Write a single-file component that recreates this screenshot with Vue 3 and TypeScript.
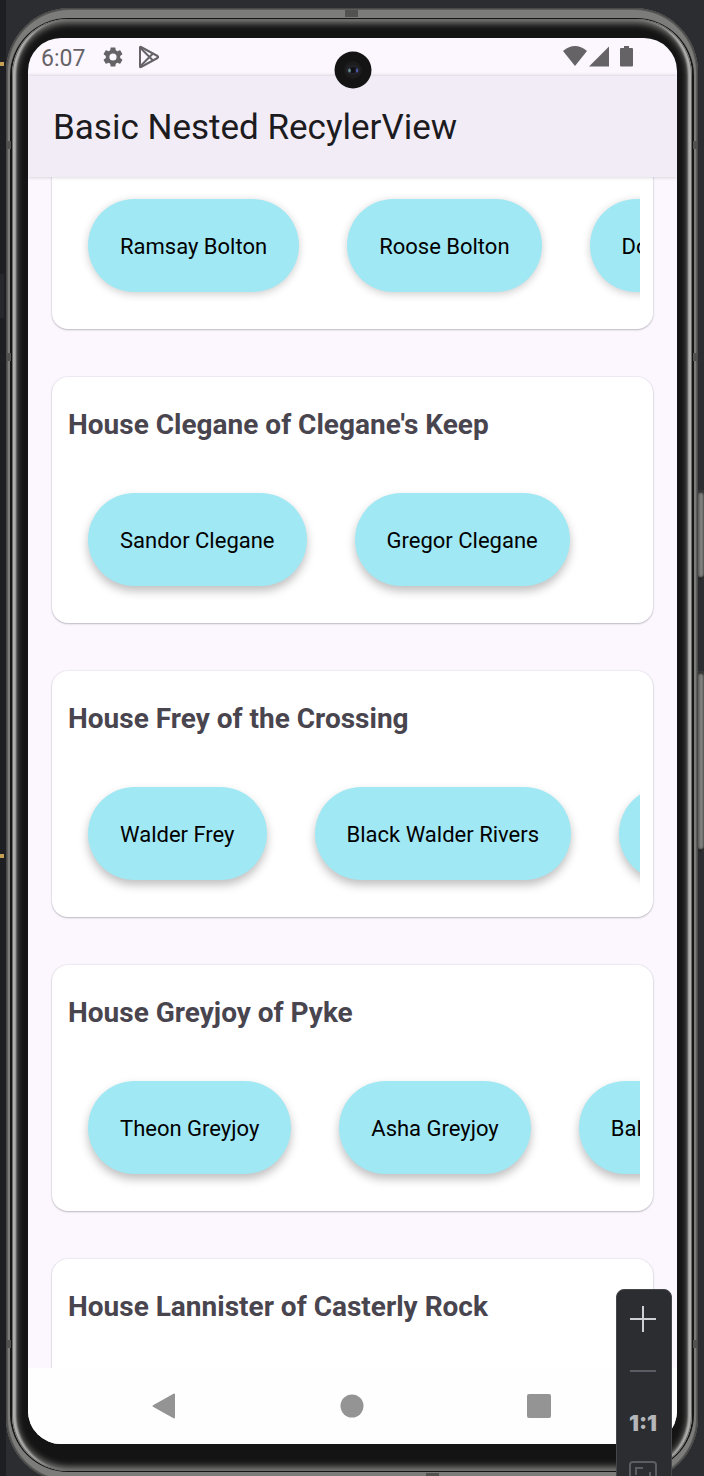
<script setup lang="ts">
interface House {
  name?: string
  members: string[]
}

const houses: House[] = [
  { members: ['Ramsay Bolton', 'Roose Bolton', 'Domeric Bolton'] },
  { name: "House Clegane of Clegane's Keep", members: ['Sandor Clegane', 'Gregor Clegane'] },
  { name: 'House Frey of the Crossing', members: ['Walder Frey', 'Black Walder Rivers', 'Lothar Frey'] },
  { name: 'House Greyjoy of Pyke', members: ['Theon Greyjoy', 'Asha Greyjoy', 'Balon Greyjoy'] },
  { name: 'House Lannister of Casterly Rock', members: ['Tywin Lannister', 'Tyrion Lannister', 'Jaime Lannister'] },
]
</script>

<template>
  <div class="emulator">
    <div class="gutter">
      <i class="mark mark-top"></i>
      <i class="mark mark-block"></i>
      <i class="mark mark-low"></i>
    </div>
    <i class="side-key power"></i>
    <i class="side-key volume"></i>

    <div class="phone">
      <i class="antenna antenna-top"></i>
      <i class="antenna antenna-bottom"></i>
      <i class="antenna antenna-side left high"></i>
      <i class="antenna antenna-side left mid"></i>
      <i class="antenna antenna-side left low"></i>
      <i class="antenna antenna-side right high"></i>
      <i class="antenna antenna-side right mid"></i>
      <i class="antenna antenna-side right low"></i>
      <div class="rim">
        <div class="bezel">
          <main class="screen">
            <div class="status">
              <span class="clock">6:07</span>
              <svg class="gear" viewBox="0 0 24 24" width="24" height="24" aria-hidden="true">
                <path fill="#666367" d="M19.14 12.94c.04-.3.06-.61.06-.94 0-.32-.02-.64-.07-.94l2.03-1.58a.49.49 0 0 0 .12-.61l-1.92-3.32a.488.488 0 0 0-.59-.22l-2.39.96c-.5-.38-1.03-.7-1.62-.94l-.36-2.54a.484.484 0 0 0-.48-.41h-3.84c-.24 0-.43.17-.47.41l-.36 2.54c-.59.24-1.13.57-1.62.94l-2.39-.96c-.22-.08-.47 0-.59.22L2.74 8.87c-.12.21-.08.47.12.61l2.03 1.58c-.05.3-.09.63-.09.94s.02.64.07.94l-2.03 1.58a.49.49 0 0 0-.12.61l1.92 3.32c.12.22.37.29.59.22l2.39-.96c.5.38 1.03.7 1.62.94l.36 2.54c.05.24.24.41.48.41h3.84c.24 0 .44-.17.47-.41l.36-2.54c.59-.24 1.13-.56 1.62-.94l2.39.96c.22.08.47 0 .59-.22l1.92-3.32c.12-.22.07-.47-.12-.61zM12 15.6A3.6 3.6 0 1 1 12 8.400a3.600 3.600 0 0 1 0 7.200z" />
              </svg>
              <svg viewBox="0 0 24 24" width="24" height="24" aria-hidden="true">
                <g fill="none" stroke="#666367" stroke-width="2" stroke-linejoin="round">
                  <path d="M3 2.400V21.600Q3 22.600 4 22L20.500 13Q21.800 12 20.500 11L4 2Q3 1.500 3 2.400z" />
                  <path d="M3.500 3L16 15.500M3.500 21L16 8.500" />
                </g>
              </svg>
              <svg class="signals" viewBox="0 0 72 24" width="72" height="24" aria-hidden="true">
                <g fill="#666367">
                  <path d="M0 6Q12-4 24 6L12 21z" />
                  <path d="M26 21.500L46 1.500V21.500z" />
                  <path d="M57 4q0-1 1-1h3V1h5v2h3q1 0 1 1v16.500q0 1-1 1H58q-1 0-1-1z" />
                </g>
              </svg>
              <svg class="camera" viewBox="0 0 38 38" width="38" height="38" aria-hidden="true">
                <circle cx="19" cy="19" r="18.500" fill="#141414" />
                <circle cx="19" cy="19" r="9" fill="#1c1c1c" />
                <ellipse cx="19" cy="19" rx="7" ry="5" fill="#23232a" />
                <circle cx="19" cy="19" r="3" fill="#121216" />
                <ellipse cx="15.500" cy="19.500" rx="1.300" ry="2" fill="#648d94" />
                <ellipse cx="23" cy="19.500" rx="1.300" ry="2" fill="#4854a0" />
              </svg>
            </div>

            <header class="app-bar">
              <h1>Basic Nested RecylerView</h1>
            </header>

            <div class="list">
              <section
                v-for="(house, i) in houses"
                :key="i"
                class="card"
                :class="{ continued: !house.name }"
              >
                <h2 v-if="house.name">{{ house.name }}</h2>
                <ul class="members">
                  <li v-for="member in house.members" :key="member">{{ member }}</li>
                </ul>
              </section>
            </div>

            <nav class="nav">
              <button type="button" aria-label="Back">
                <svg viewBox="0 0 28 28" width="28" height="28">
                  <path d="M3.500 14L24 2.500V25.500z" fill="#949494" stroke="#949494" stroke-width="2" stroke-linejoin="round" />
                </svg>
              </button>
              <button type="button" aria-label="Home">
                <svg viewBox="0 0 28 28" width="28" height="28"><circle cx="14" cy="14" r="11.500" fill="#949494" /></svg>
              </button>
              <button type="button" aria-label="Overview">
                <svg viewBox="0 0 28 28" width="28" height="28"><rect x="2" y="2" width="24" height="24" rx="2" fill="#949494" /></svg>
              </button>
            </nav>
          </main>
        </div>
      </div>
    </div>

    <div class="zoom-bar">
      <button type="button" aria-label="Zoom in">
        <svg viewBox="0 0 26 26" width="26" height="26"><path d="M0 13H26M13 0V26" stroke="#ced0d6" stroke-width="2" /></svg>
      </button>
      <button type="button" aria-label="Zoom out">
        <svg viewBox="0 0 26 26" width="26" height="26"><path d="M0 13H26" stroke="#5a5d63" stroke-width="2" /></svg>
      </button>
      <button type="button" class="actual">1:1</button>
      <button type="button" aria-label="Fit to window">
        <svg viewBox="0 0 28 28" width="28" height="28" fill="none" stroke="#5a5d63" stroke-width="2">
          <rect x="1" y="1" width="26" height="26" rx="3" />
          <path d="M7 14V7H14M21 11V21H14" />
        </svg>
      </button>
    </div>
  </div>
</template>

<style>
body {
  margin: 0;
  background: #2b2d30;
}
</style>

<style scoped>
.emulator {
  position: relative;
  display: flex;
  box-sizing: border-box;
  height: 100vh;
  padding: 8px 6px 0 0;
  overflow: hidden;
  background: #2b2d30;
  font-family: Roboto, "Liberation Sans", sans-serif;
}
.gutter {
  position: relative;
  flex: none;
  width: 6px;
  margin-top: -8px;
  background: #1e1f22;
}
.mark {
  position: absolute;
  left: 0;
  width: 4px;
  height: 4px;
  background: #c4a052;
}
.mark-top { top: 62px; }
.mark-block { top: 274px; height: 44px; background: #26282e; }
.mark-low { top: 854px; }
.side-key {
  position: absolute;
  right: 0;
  width: 7px;
  border-radius: 3px;
  background: linear-gradient(90deg, #4c4c4b, #858583 60%, #5c5c5b);
  box-shadow: inset 0 4px 2px -1px #333, inset 0 -4px 2px -1px #222;
}
.power { top: 490px; height: 90px; }
.volume { top: 671px; height: 181px; }

.phone {
  position: relative;
  display: flex;
  flex: 1;
  min-width: 0;
  box-sizing: border-box;
  margin-bottom: -6px;
  padding: 10px 4px;
  border-radius: 64px;
  background: #7c7c7a;
  box-shadow: inset 0 0 0 1px #484948, inset 0 0 0 2px #5c5c5a;
}
.rim {
  display: flex;
  flex: 1;
  min-width: 0;
  padding: 1px 2px;
  border-radius: 58px;
  background: #161616;
}
.bezel {
  display: flex;
  flex: 1;
  min-width: 0;
  box-sizing: border-box;
  padding: 19px 15px 27px 16px;
  border-radius: 56px;
  background: #141414;
  box-shadow:
    inset 0 0 0 1px #6a6a69,
    inset 5px 0 2px -1px #b0b0ae,
    inset -5px 0 2px -1px #b0b0ae,
    inset 0 0 7px 4px #858583;
}
.antenna {
  position: absolute;
  background: #525251;
}
.antenna-top { top: 2px; left: 339px; width: 13px; height: 7px; }
.antenna-bottom { bottom: 2px; left: 420px; width: 13px; height: 7px; }
.antenna-side { width: 4px; height: 8px; }
.left { left: 1px; }
.right { right: 1px; }
.high { top: 133px; }
.mid { top: 345px; }
.low { bottom: 134px; }

.screen {
  display: flex;
  flex: 1;
  flex-direction: column;
  min-width: 0;
  overflow: hidden;
  border-radius: 33px;
  background: #fcf7ff;
}
.status {
  position: relative;
  z-index: 2;
  display: flex;
  flex: none;
  align-items: center;
  gap: 12px;
  height: 38px;
  padding: 0 42px 0 13px;
}
.clock {
  margin-right: 4px;
  padding-top: 3px;
  color: #666367;
  font-size: 23px;
  line-height: 28px;
}
.signals { margin-left: auto; }
.camera {
  position: absolute;
  top: 13px;
  left: 50%;
  margin-left: -19px;
}
.app-bar {
  position: relative;
  z-index: 1;
  display: flex;
  flex: none;
  align-items: center;
  box-sizing: border-box;
  height: 101px;
  padding: 3px 25px 0;
  background: #f2ecf7;
  box-shadow: 0 0 4px rgba(0, 0, 0, 0.22);
}
h1 {
  margin: 0;
  color: #1c1b20;
  font-size: 35px;
  font-weight: 400;
  line-height: 44px;
  white-space: nowrap;
}
.list {
  flex: 1;
  min-height: 0;
  overflow: hidden;
  padding: 0 24px;
}
.card {
  margin-bottom: 48px;
  padding-bottom: 13px;
  border-radius: 16px;
  background: #fff;
  box-shadow: 0 0 1px 1px rgba(60, 50, 80, 0.06), 0 1px 2px rgba(0, 0, 0, 0.22);
}
.continued {
  margin-top: -2px;
  border-radius: 0 0 16px 16px;
}
h2 {
  margin: 0;
  padding: 28px 16px 24px;
  color: #49454f;
  font-size: 28px;
  font-weight: 700;
  line-height: 40px;
  white-space: nowrap;
}
.members {
  display: flex;
  gap: 48px;
  margin: 0 13px 0 12px;
  padding: 24px;
  overflow: hidden;
  list-style: none;
}
.members li {
  flex: none;
  padding: 3px 32px 0;
  border-radius: 47px;
  background: #a0e8f4;
  box-shadow: 0 5px 10px rgba(0, 0, 0, 0.25);
  color: #000;
  font-size: 22px;
  line-height: 90px;
  white-space: nowrap;
}
.continued li {
  box-shadow: 0 2px 8px rgba(0, 0, 0, 0.2);
}
.nav {
  display: flex;
  flex: none;
  align-items: center;
  justify-content: space-between;
  height: 76px;
  padding: 0 124px 0 122px;
  background: #fefefe;
}
button {
  display: flex;
  align-items: center;
  justify-content: center;
  padding: 0;
  border: 0;
  background: none;
  font-family: inherit;
}
.zoom-bar {
  position: absolute;
  right: 32px;
  bottom: -26px;
  z-index: 3;
  box-sizing: border-box;
  width: 56px;
  padding: 3px 2px 0 0;
  border: 1px solid #454648;
  border-radius: 8px;
  background: #2b2d30;
}
.zoom-bar button {
  width: 100%;
  height: 52px;
}
.zoom-bar .actual {
  color: #b4b6ba;
  font-family: Inter, Roboto, sans-serif;
  font-size: 22px;
  font-weight: 900;
}
</style>
